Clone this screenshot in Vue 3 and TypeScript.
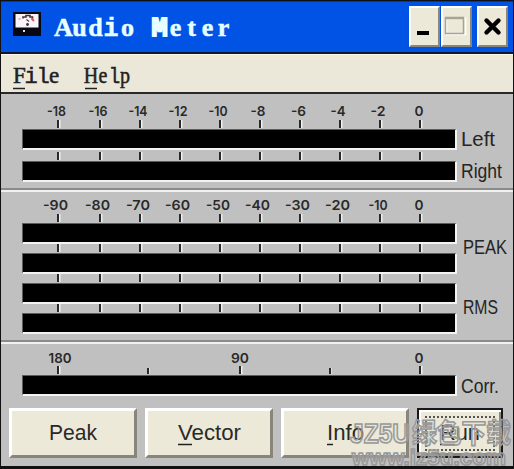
<script setup lang="ts">
interface Mark { x: number; at: number; text: string; width: number }
interface Bank { name: string; marks: Mark[]; bars: number; ticks: number[]; minor: number[] }
interface Caption { text: string; width: number }

const ticks = [58, 100, 140, 180, 220, 260, 300, 340, 380, 420]

const row = (texts: string[], centers: number[], widths: number[], at: number[]): Mark[] =>
  texts.map((text, i) => ({ text, x: centers[i], width: widths[i], at: at[i] }))

const banks: (Bank & { captions: Caption[] })[] = [
  {
    name: 'level',
    bars: 2,
    ticks,
    minor: [],
    marks: row(
      ['-18', '-16', '-14', '-12', '-10', '-8', '-6', '-4', '-2', '0'],
      [56.5, 98, 138, 178, 218, 258, 298.5, 338, 378, 419],
      [19, 19, 19, 19, 19, 15, 15, 15, 15, 9],
      ticks,
    ),
    captions: [{ text: 'Left', width: 34 }, { text: 'Right', width: 41 }],
  },
  {
    name: 'loudness',
    bars: 4,
    ticks,
    minor: [],
    marks: row(
      ['-90', '-80', '-70', '-60', '-50', '-40', '-30', '-20', '-10', '0'],
      [55.5, 97.5, 138, 177.5, 218, 257.5, 297.5, 337.5, 378, 419],
      [25, 25, 24, 25, 24, 25, 25, 25, 19, 9],
      ticks,
    ),
    captions: [{ text: 'PEAK', width: 44 }, { text: 'RMS', width: 35 }],
  },
  {
    name: 'correlation',
    bars: 1,
    ticks: [58, 240, 420],
    minor: [148, 330],
    marks: row(['180', '90', '0'], [60, 240, 419], [23, 18, 9], [58, 240, 420]),
    captions: [{ text: 'Corr.', width: 38 }],
  },
]
</script>

<template>
  <main class="window">
    <header class="titlebar">
      <svg class="app-icon" width="28" height="25" viewBox="0 0 28 25">
        <rect width="28" height="24" fill="#080812" />
        <rect x="2.5" y="2" width="23" height="13.5" fill="#f8f4fa" />
        <path d="M10 6.500V5h3V3.500h4V5h2.500v2" fill="none" stroke="#4b3030" stroke-width="1.600" />
        <path d="M18.500 6.500l2.500 2.500" stroke="#d25a50" stroke-width="1.800" />
        <path d="M5.500 7h2" stroke="#d99a90" stroke-width="1.500" />
        <path d="M13.500 7.500l2.500 2" stroke="#55383c" stroke-width="1.300" />
        <circle cx="14.500" cy="12.500" r="1.400" fill="#333" />
        <rect x="10" y="18" width="2" height="2" fill="#ddd" />
      </svg>
      <svg class="title" width="190" height="40">
        <text class="title-text" y="27" x="9.500 25.500 41.500 57 73.500 89.500 105.500 121.500 137.500 153.500 169.500">Aud<tspan class="slab">i</tspan>o <tspan class="wide">M</tspan>eter</text>
      </svg>
      <div class="controls">
        <button class="control" aria-label="Minimize">
          <svg width="30" height="40"><rect x="8" y="24" width="12" height="4" fill="#000" /></svg>
        </button>
        <button class="control" aria-label="Maximize">
          <svg width="30" height="40">
            <rect x="5.500" y="11.500" width="19" height="16" fill="none" stroke="#fff" stroke-width="1.500" />
            <rect x="4.500" y="11" width="18" height="15.500" fill="none" stroke="#aaa295" stroke-width="1.500" />
            <path d="M4 11h19" stroke="#aaa295" stroke-width="2.500" />
          </svg>
        </button>
        <button class="control close" aria-label="Close">
          <svg width="30" height="40"><path d="M9.500 13.500L21.500 25.500M21.500 13.500L9.500 25.500" stroke="#000" stroke-width="4.400" stroke-linecap="round" /></svg>
        </button>
      </div>
    </header>

    <nav class="menu">
      <svg width="72" height="34"><text class="menu-text" y="25" x="6.500 18 30 41">F<tspan class="slab">il</tspan>e</text><path d="M0 30.500h12" stroke="#222" stroke-width="1.500" /></svg>
      <svg width="60" height="34"><text class="menu-text narrow" y="25" x="7 20.500 34 46">He<tspan class="slab">l</tspan>p</text><path d="M0 30.500h12" stroke="#222" stroke-width="1.500" /></svg>
    </nav>

    <section v-for="bank in banks" :key="bank.name" class="bank" :class="bank.name">
      <div class="meters">
        <svg class="marks" width="456" height="16">
          <text
            v-for="m in bank.marks" :key="m.text" class="mark" y="11.500"
            :x="m.x - m.width / 2" :textLength="m.width" lengthAdjust="spacingAndGlyphs"
          >{{ m.text }}</text>
        </svg>
        <template v-for="n in bank.bars" :key="n">
          <svg class="ticks" width="456" height="9">
            <g v-for="t in bank.ticks" :key="t">
              <rect :x="t - 1" y="0" width="2" height="8" fill="#292929" />
              <rect :x="t + 1" y="0" width="1.500" height="8" fill="#f0f0f0" />
            </g>
            <g v-for="t in bank.minor" :key="t">
              <rect :x="t - 1" y="2" width="2" height="6" fill="#292929" />
              <rect :x="t + 1" y="2" width="1" height="6" fill="#ddd" />
            </g>
          </svg>
          <div class="bar"></div>
        </template>
      </div>
      <div class="captions">
        <svg v-for="c in bank.captions" :key="c.text" class="caption" width="50" height="24">
          <text class="caption-text" x="0" y="17" :textLength="c.width" lengthAdjust="spacingAndGlyphs">{{ c.text }}</text>
        </svg>
      </div>
    </section>

    <footer class="actions">
      <button class="action"><svg width="48" height="28"><text class="action-text" y="21" textLength="48" lengthAdjust="spacingAndGlyphs">Peak</text></svg></button>
      <button class="action"><svg width="63" height="28"><text class="action-text" y="21" textLength="63" lengthAdjust="spacingAndGlyphs">Vector</text><path d="M0 25.500h14" stroke="#222" stroke-width="1.500" /></svg></button>
      <button class="action"><svg width="37" height="28"><text class="action-text" y="21" textLength="37" lengthAdjust="spacingAndGlyphs">Info</text><path d="M0 25.500h6" stroke="#222" stroke-width="1.500" /></svg></button>
      <button class="action run"><span class="focus"><svg width="40" height="28"><text class="action-text" y="21" textLength="40" lengthAdjust="spacingAndGlyphs">Run</text><path d="M0 25.500h15" stroke="#222" stroke-width="1.500" /></svg></span></button>
    </footer>

    <svg class="watermark" width="168" height="56">
      <text class="stamp" x="5" y="29" textLength="60" lengthAdjust="spacingAndGlyphs">JZ5U</text>
      <text class="stamp" x="67" y="29" textLength="99" lengthAdjust="spacingAndGlyphs">绿色下载</text>
      <text class="stamp url" x="7" y="51" textLength="154" lengthAdjust="spacingAndGlyphs">www.jz5u.com</text>
    </svg>
  </main>
</template>

<style>
body { overflow: hidden; }
</style>

<style scoped>
.window {
  position: relative;
  box-sizing: border-box;
  width: 514px;
  height: 469px;
  display: flex;
  flex-direction: column;
  overflow: hidden;
  background: #c0c0c0;
  border: solid #111;
  border-width: 1px 1px 3px;
  font-family: "Liberation Sans", "Noto Sans CJK SC", sans-serif;
}
svg { display: block; flex: none; overflow: visible; }
button { margin: 0; padding: 0; font: inherit; }
.titlebar {
  box-sizing: border-box;
  height: 53px;
  flex: none;
  display: flex;
  align-items: flex-start;
  padding: 4px 5px 0 12px;
  background: #0053e5;
  border-top: 1px solid #0a35a0;
  border-bottom: 2px solid #10152a;
}
.app-icon { margin-top: 6px; }
.title { margin: 3px 0 0 13px; }
.title-text {
  font: bold 26px "Liberation Serif", serif;
  fill: #e8ffff;
  stroke: #e8ffff;
  stroke-width: 0.5;
  text-anchor: middle;
}
.title-text .slab { font: bold 25px "Liberation Mono", monospace; }
.wide { font: bold 27px "Liberation Mono", monospace; stroke-width: 2; }
.controls { display: flex; margin-left: auto; gap: 1px; }
.control {
  box-sizing: border-box;
  width: 31px;
  height: 41px;
  background: #ece9d8;
  border: solid;
  border-width: 2px;
  border-color: #fff #898579 #898579 #fff;
}
.control svg { margin: -2px; }
.close { margin-left: 4px; }
.menu {
  box-sizing: border-box;
  height: 40px;
  flex: none;
  display: flex;
  padding: 3px 12px 0;
  background: #ebe8d9;
  border-bottom: 2px solid #292929;
  border-top: 1px solid #faf6e8;
}
.menu-text {
  font: 23px "Liberation Serif", serif;
  fill: #222;
  stroke: #222;
  stroke-width: 0.5;
  text-anchor: middle;
}
.menu-text .slab { font: 22px "Liberation Mono", monospace; }
.narrow { transform: scaleX(0.87); }
.bank {
  box-sizing: border-box;
  flex: none;
  display: flex;
  padding-top: 10px;
}
.level { height: 96px; border-bottom: 2px solid #8a8a8a; }
.loudness { height: 152px; border-bottom: 2px solid #8a8a8a; border-top: 2px solid #f1f1f1; padding-top: 6px; }
.correlation { height: 66px; border-top: 2px solid #f1f1f1; padding-top: 6px; }
.meters { width: 456px; flex: none; }
.marks, .ticks { margin-left: -1px; }
.correlation .marks { transform: translateY(1px); }
.mark { font: 600 13.500px Inter, sans-serif; fill: #292929; }
.bar {
  box-sizing: border-box;
  width: 435px;
  height: 21px;
  margin-left: 21px;
  background: #000;
  border: solid;
  border-width: 1px 2px 2px 1px;
  border-color: #5c5c5c #f3f3f3 #f3f3f3 #5c5c5c;
}
.level .ticks { margin-top: 2px; }
.level .marks + .ticks { margin-top: 0; }
.captions { display: flex; flex-direction: column; padding-left: 4px; }
.level .captions { padding-top: 25px; gap: 8px; }
.loudness .captions { padding: 39px 0 0 6px; gap: 36px; }
.correlation .captions { padding-top: 26px; }
.caption-text { font-size: 19.500px; fill: #252525; }
.actions { display: flex; gap: 8px; padding-left: 8px; }
.action {
  box-sizing: border-box;
  width: 128px;
  height: 50px;
  display: flex;
  align-items: center;
  justify-content: center;
  background: #ece9d8;
  border: solid;
  border-width: 3px;
  border-color: #fff #88857a #88857a #fff;
}
.action-text { font-size: 22.500px; fill: #292929; }
.run {
  width: 86px;
  border: 2px solid #191919;
  box-shadow: inset 2px 2px #fff, inset -2px -3px #8b887d;
}
.focus {
  box-sizing: border-box;
  width: 70px;
  height: 35px;
  display: flex;
  align-items: center;
  justify-content: center;
  border: 2px dotted #555;
}
.watermark { position: absolute; left: 344px; top: 413px; }
.stamp {
  font: bold 27px "Liberation Sans", "Noto Sans CJK SC", sans-serif;
  fill: rgba(215, 215, 210, 0.25);
  stroke: #999;
  stroke-width: 1.600;
}
.url { font-size: 22px; }
</style>
